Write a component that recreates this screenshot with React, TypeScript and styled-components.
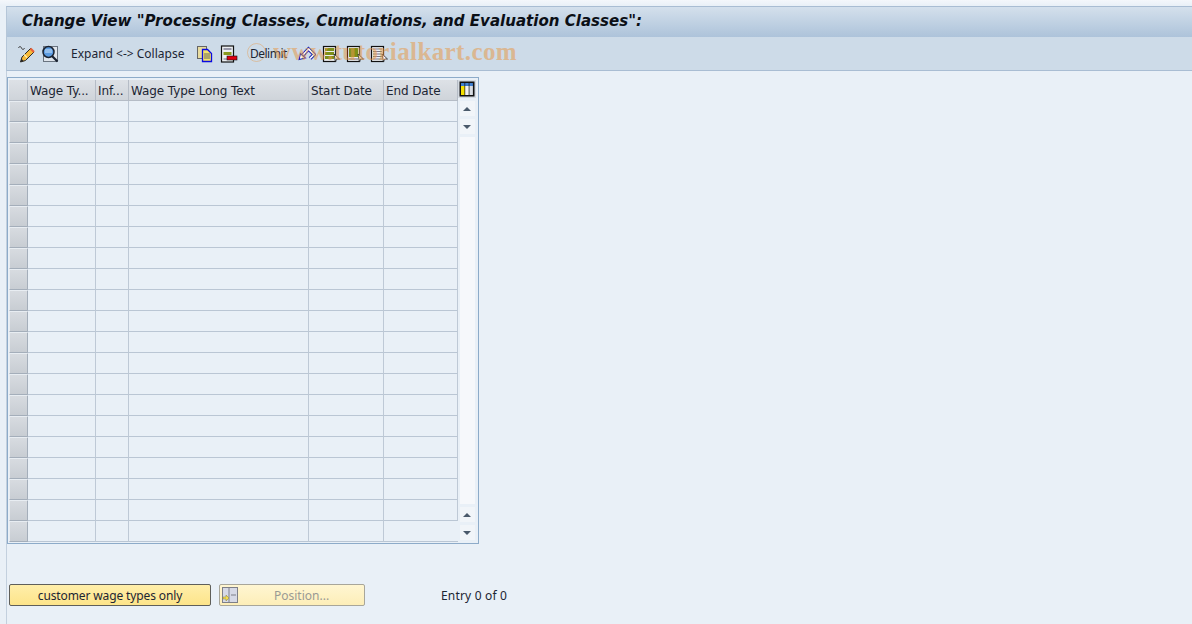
import { Fragment } from "react";
import styled, { createGlobalStyle } from "styled-components";

const GlobalStyle = createGlobalStyle`
  html, body {
    margin: 0;
    padding: 0;
    background: #e9f0f7;
  }
  body {
    font-family: "DejaVu Sans", sans-serif;
    font-size: 12px;
    color: #1c2533;
  }
`;

const Page = styled.div`
  position: relative;
  width: 1192px;
  height: 624px;
  overflow: hidden;
  display: flex;
  flex-direction: column;
  padding-left: 6px;
  box-sizing: border-box;
  background: linear-gradient(#f4f7fb 0, #e9f0f7 6px);
`;

const TitleBar = styled.div`
  margin-top: 6px;
  height: 31px;
  display: flex;
  align-items: center;
  padding: 0 0 2px 15px;
  box-sizing: border-box;
  border-top: 1px solid #a9bdd3;
  border-left: 1px solid #b5c6d8;
  background: linear-gradient(#d4e0ec, #adc3da);
`;

const Title = styled.h1`
  margin: 0;
  font-family: "DejaVu Sans", sans-serif;
  font-size: 15.05px;
  font-weight: bold;
  font-style: italic;
  color: #0b0f16;
  white-space: nowrap;
`;

const Toolbar = styled.div`
  height: 34px;
  display: flex;
  align-items: center;
  padding-left: 11px;
  box-sizing: border-box;
  border-left: 1px solid #b5c6d8;
  border-bottom: 1px solid #a9bdd3;
  background: #cddbe8;
`;

const ToolIcon = styled.svg<{ $gap?: number }>`
  width: 18px;
  height: 18px;
  flex: none;
  margin-right: ${(p) => p.$gap ?? 6}px;
`;

const ToolText = styled.span<{ $width: number; $gap: number; $spacing?: number }>`
  width: ${(p) => p.$width}px;
  font-family: "Noto Sans", sans-serif;
  font-size: 12px;
  letter-spacing: ${(p) => p.$spacing ?? 0}px;
  white-space: nowrap;
  margin-right: ${(p) => p.$gap}px;
`;

const Content = styled.div`
  flex: 1;
  display: flex;
  flex-direction: column;
  border-left: 1px solid #c3d0de;
  padding-top: 6px;
`;

const Grid = styled.div`
  width: 472px;
  height: 467px;
  box-sizing: border-box;
  border: 1px solid #8dabc9;
  padding: 2px 2px 1px 1px;
  display: flex;
`;

const Table = styled.div`
  width: 449px;
  display: grid;
  grid-template-columns: 19px 68px 33px 180px 75px 74px;
  grid-auto-rows: 21px;
  border-bottom: 1px solid #b4c3d4;
`;

const HeadCell = styled.div`
  background: linear-gradient(#dde1e6, #cfd4da);
  border-right: 1px solid #b5bcc6;
  border-bottom: 1px solid #b5bcc6;
  box-sizing: border-box;
  height: 21px;
  padding-left: 2px;
  line-height: 22px;
  font-size: 12px;
  letter-spacing: -0.1px;
  white-space: nowrap;
  overflow: hidden;
`;

const RowHandle = styled.div`
  box-sizing: border-box;
  height: 21px;
  border: 1px solid #a4aeba;
  border-top-color: #e8edf2;
  border-left-color: #e8edf2;
  border-radius: 1px;
  background: linear-gradient(#d7dbe0, #c8cdd3);
`;

const Cell = styled.div`
  box-sizing: border-box;
  height: 21px;
  border-right: 1px solid #bec9d6;
  border-bottom: 1px solid #bac6d4;
  &:last-child {
    border-right: none;
  }
`;

const ScrollColumn = styled.div`
  width: 18px;
  padding-bottom: 2px;
  box-sizing: border-box;
  display: flex;
  flex-direction: column;
  align-items: center;
  gap: 3px;
`;

const ColumnsButton = styled.div`
  flex: none;
  width: 18px;
  height: 18px;
  display: flex;
  align-items: center;
  justify-content: center;
  background: #d3d9e0;
`;

const ScrollButton = styled.div`
  flex: none;
  width: 15px;
  height: 15px;
  display: flex;
  align-items: center;
  justify-content: center;
  background: #f1f5f9;
`;

const ScrollTrack = styled.div`
  flex: 1;
  width: 15px;
  background: #f6f8fb;
`;

const Arrow = styled.div<{ $down?: boolean }>`
  width: 0;
  height: 0;
  border-left: 4.5px solid transparent;
  border-right: 4.5px solid transparent;
  ${(p) => (p.$down ? "border-top: 4px solid #4a5a6b;" : "border-bottom: 4px solid #4a5a6b;")}
`;

const Footer = styled.div`
  margin-top: 40px;
  padding-left: 2px;
  display: flex;
  align-items: center;
`;

const PrimaryButton = styled.button`
  width: 202px;
  height: 22px;
  padding: 0;
  box-sizing: border-box;
  border: 1px solid #5f5f5a;
  border-radius: 2px;
  background: linear-gradient(#ffeeaa, #fde48a);
  font-family: "Noto Sans", sans-serif;
  font-size: 12px;
  letter-spacing: -0.12px;
  color: #1c2533;
`;

const DisabledButton = styled.button`
  width: 146px;
  height: 22px;
  margin-left: 8px;
  padding: 0 0 0 2px;
  box-sizing: border-box;
  display: flex;
  align-items: center;
  border: 1px solid #a8a69a;
  border-radius: 2px;
  background: linear-gradient(#fff6d2, #fdeeb8);
  font-family: "Noto Sans", sans-serif;
  font-size: 12px;
  color: #9a9a94;
`;

const DisabledLabel = styled.span`
  margin-left: 36px;
`;

const EntryText = styled.span`
  margin-left: 76px;
  font-family: "Noto Sans", sans-serif;
  font-size: 12px;
  letter-spacing: 0.18px;
  white-space: nowrap;
`;

const Watermark = styled.div`
  position: absolute;
  left: 273px;
  top: 38px;
  font-family: "Liberation Serif", serif;
  font-size: 25px;
  font-weight: bold;
  letter-spacing: 0.4px;
  color: #e59a4c;
  opacity: 0.55;
  white-space: nowrap;
  pointer-events: none;
`;

const WatermarkMark = styled.div`
  position: absolute;
  left: 247px;
  top: 43px;
  width: 19px;
  height: 19px;
  box-sizing: border-box;
  border: 1px solid #e59a4c;
  border-radius: 50%;
  opacity: 0.45;
  pointer-events: none;
`;

const WandIcon = () => (
  <ToolIcon viewBox="0 0 18 18" $gap={5}>
    <path d="M0.5 3c1-2 2-2 3 0s2 2 3 0" fill="none" stroke="#333" strokeWidth="1" />
    <path d="M2.5 17l1.5-5 8.5-8.5 3.5 3.5-8.5 8.5z" fill="#f6b93a" stroke="#2a2a2a" strokeWidth="1" />
    <path d="M12.5 3.5l3.5 3.5" stroke="#e8603a" strokeWidth="2.2" />
    <path d="M6 9.5l3 3" stroke="#fff2b0" strokeWidth="1.2" />
    <path d="M2.5 17l1-3.2 2.2 2.2z" fill="#222" />
  </ToolIcon>
);

const InspectIcon = () => (
  <ToolIcon viewBox="0 0 18 18" $gap={12}>
    <rect x="2.5" y="1.5" width="14" height="15" fill="#dfe5ec" stroke="#6a7480" />
    <circle cx="7.5" cy="7" r="5.5" fill="#5b9be0" stroke="#1a2230" strokeWidth="1.5" />
    <path d="M4 5h7M4 7h7" stroke="#cfe4fa" strokeWidth="1" />
    <path d="M11 11l5.5 5.5" stroke="#1a2230" strokeWidth="2.2" />
  </ToolIcon>
);

const CopyIcon = () => (
  <ToolIcon viewBox="0 0 18 18" $gap={5}>
    <rect x="0.5" y="1.5" width="9" height="12" fill="#e8dca0" stroke="#666" />
    <path d="M5.5 4.5h5l4 4v8h-9z" fill="#f6e36a" stroke="#0a0ae0" strokeWidth="1.3" />
    <path d="M7 9h6M7 11h6M7 13h6" stroke="#666" strokeWidth="1" />
  </ToolIcon>
);

const RemoveIcon = () => (
  <ToolIcon viewBox="0 0 18 18" $gap={12}>
    <rect x="1.5" y="1" width="12" height="16" fill="#eceff2" stroke="#111" strokeWidth="1.2" />
    <path d="M3.5 4h8" stroke="#99a" strokeWidth="2" />
    <rect x="3.5" y="7" width="8" height="3" fill="#8a9a20" />
    <path d="M3.5 14h5" stroke="#99a" strokeWidth="1.5" />
    <rect x="7" y="11" width="10" height="4" fill="#e00010" stroke="#111" strokeWidth="0.6" />
  </ToolIcon>
);

const DelimitIcon = () => (
  <ToolIcon viewBox="0 0 18 18">
    <path d="M4 11l6.5-7 5.500 5.500-4 4" fill="none" stroke="#1a22b0" strokeWidth="3.6" />
    <path d="M4 11l6.5-7 5.500 5.500-4 4" fill="none" stroke="#fff" strokeWidth="1.6" />
    <path d="M1 14.500l1.500-6 5 4.500z" fill="#fff" stroke="#1a22b0" strokeWidth="1.1" />
  </ToolIcon>
);

const BlockIcon = ({ variant }: { variant: "rows" | "solid" | "plain" }) => (
  <ToolIcon viewBox="0 0 18 18">
    <rect x="1.500" y="1.500" width="12" height="15" fill="#eef0f2" stroke="#111" strokeWidth="1.2" />
    {variant === "rows" && (
      <>
        <rect x="3" y="3" width="9" height="3" fill="#7d8f1a" />
        <rect x="3" y="7" width="9" height="3" fill="#7d8f1a" />
        <rect x="3" y="11" width="9" height="3" fill="#7d8f1a" />
      </>
    )}
    {variant === "solid" && <rect x="3" y="3" width="9" height="9" fill="#7d8f1a" />}
    {variant === "solid" && <path d="M3 14h9" stroke="#889" strokeWidth="1.4" />}
    {variant === "plain" && <path d="M3 4h9M3 6.500h9M3 9h9M3 11.500h9M3 14h9" stroke="#778" strokeWidth="1" />}
    <path d="M12 9l5.500 5h-3l-1 3z" fill="#fff" stroke="#222" strokeWidth="0.8" />
  </ToolIcon>
);

const ColumnsIcon = () => (
  <svg width="16" height="16" viewBox="0 0 16 16">
    <rect x="0.500" y="0.500" width="15" height="15" fill="#111" />
    <rect x="2" y="5" width="3.500" height="9" fill="#f4e000" />
    <rect x="6.200" y="5" width="3.500" height="9" fill="#f2f2f2" />
    <rect x="10.400" y="5" width="3.500" height="9" fill="#d8dce2" />
    <rect x="2" y="2" width="3.500" height="3" fill="#3f7fd0" />
    <rect x="6.200" y="2" width="3.500" height="3" fill="#3f7fd0" />
    <rect x="10.400" y="2" width="3.500" height="3" fill="#3f7fd0" />
  </svg>
);

const PositionIcon = () => (
  <svg width="16" height="16" viewBox="0 0 16 16">
    <rect x="0.500" y="0.500" width="15" height="15" fill="#d6d9e6" stroke="#7d7f88" />
    <path d="M7 1v14M9 8h5" stroke="#7d7f88" strokeWidth="1" />
    <path d="M1 10h3V8l3 3-3 3v-2H1z" fill="#f4dc50" stroke="#8a8030" strokeWidth="0.500" />
  </svg>
);

const HEADERS = ["Wage Ty...", "Inf...", "Wage Type Long Text", "Start Date", "End Date"];
const ROW_COUNT = 21;

export default function App() {
  const rows = Array.from({ length: ROW_COUNT }, (_, i) => i);
  return (
    <Page>
      <GlobalStyle />
      <TitleBar>
        <Title>Change View "Processing Classes, Cumulations, and Evaluation Classes":</Title>
      </TitleBar>
      <Toolbar>
        <WandIcon />
        <InspectIcon />
        <ToolText $width={113} $gap={13}>Expand &lt;-&gt; Collapse</ToolText>
        <CopyIcon />
        <RemoveIcon />
        <ToolText $width={35} $gap={13} $spacing={-0.5}>Delimit</ToolText>
        <DelimitIcon />
        <BlockIcon variant="rows" />
        <BlockIcon variant="solid" />
        <BlockIcon variant="plain" />
      </Toolbar>
      <Content>
        <Grid>
          <Table>
            <HeadCell />
            {HEADERS.map((h) => (
              <HeadCell key={h}>{h}</HeadCell>
            ))}
            {rows.map((r) => (
              <Fragment key={r}>
                <RowHandle />
                {HEADERS.map((h) => (
                  <Cell key={h} />
                ))}
              </Fragment>
            ))}
          </Table>
          <ScrollColumn>
            <ColumnsButton>
              <ColumnsIcon />
            </ColumnsButton>
            <ScrollButton>
              <Arrow />
            </ScrollButton>
            <ScrollButton>
              <Arrow $down />
            </ScrollButton>
            <ScrollTrack />
            <ScrollButton>
              <Arrow />
            </ScrollButton>
            <ScrollButton>
              <Arrow $down />
            </ScrollButton>
          </ScrollColumn>
        </Grid>
        <Footer>
          <PrimaryButton>customer wage types only</PrimaryButton>
          <DisabledButton disabled>
            <PositionIcon />
            <DisabledLabel>Position...</DisabledLabel>
          </DisabledButton>
          <EntryText>Entry 0 of 0</EntryText>
        </Footer>
      </Content>
      <WatermarkMark />
      <Watermark>www.tutorialkart.com</Watermark>
    </Page>
  );
}
